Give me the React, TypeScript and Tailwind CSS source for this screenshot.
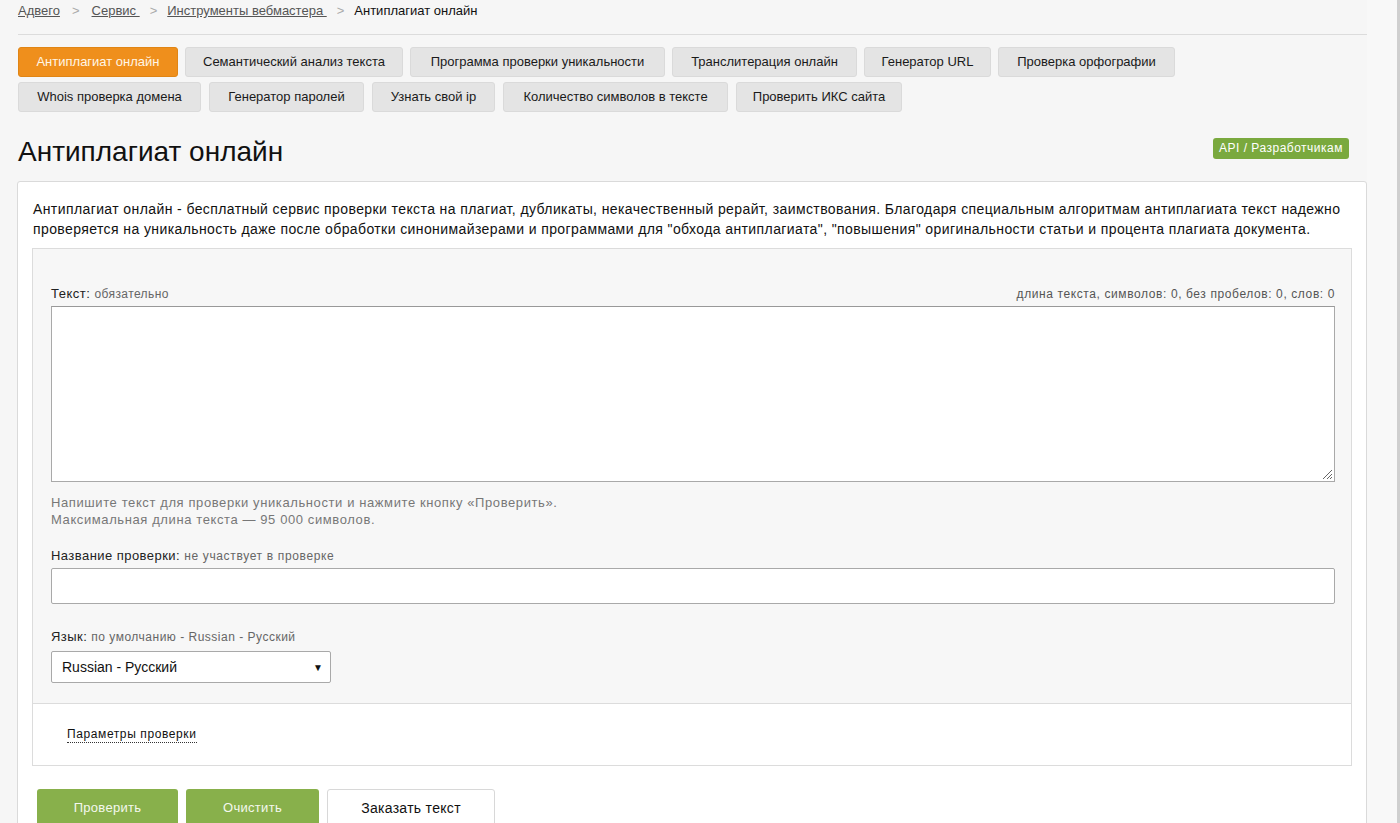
import React from "react";

const font = { fontFamily: '"Liberation Sans", Arial, sans-serif' };

const row1 = [
  { t: "Антиплагиат онлайн", w: "w-[160px]", active: true },
  { t: "Семантический анализ текста", w: "w-[218px]" },
  { t: "Программа проверки уникальности", w: "w-[255px]" },
  { t: "Транслитерация онлайн", w: "w-[185px]" },
  { t: "Генератор URL", w: "w-[127px]" },
  { t: "Проверка орфографии", w: "w-[177px]" },
];
const row2 = [
  { t: "Whois проверка домена", w: "w-[183px]" },
  { t: "Генератор паролей", w: "w-[155px]" },
  { t: "Узнать свой ip", w: "w-[123px]" },
  { t: "Количество символов в тексте", w: "w-[225px]" },
  { t: "Проверить ИКС сайта", w: "w-[166px]" },
];

function Tab({ t, w, active }: { t: string; w: string; active?: boolean }) {
  return (
    <div
      className={
        "h-[30px] flex items-center justify-center rounded-[3px] text-[13px] border " +
        w +
        " " +
        (active
          ? "bg-[#ef8f1c] border-[#e08515] text-[#fff6e6]"
          : "bg-[#e4e4e4] border-[#dadada] text-[#1a1a1a]")
      }
    >
      {t}
    </div>
  );
}

export default function App() {
  return (
    <div className="flex h-[823px] overflow-hidden bg-[#f6f6f6] text-[#1a1a1a]" style={font}>
      <div className="w-[1367px] shrink-0 pl-[17px]">
        {/* breadcrumb */}
        <div className="h-[35px] border-b border-[#dcdcdc] pt-[3px] ml-[1px] flex items-start text-[13px] leading-[16px]">
          <span className="underline text-[#555]">Адвего</span>
          <span className="mx-[12px] text-[#aaa]">&gt;</span>
          <span className="underline text-[#555]">Сервис&nbsp;</span>
          <span className="mx-[10px] text-[#aaa]">&gt;</span>
          <span className="underline text-[#555]">Инструменты вебмастера&nbsp;</span>
          <span className="mx-[10px] text-[#aaa]">&gt;</span>
          <span className="text-[#111]">Антиплагиат онлайн</span>
        </div>

        {/* tabs */}
        <div className="mt-[12px] ml-[1px] flex flex-col gap-[5px]">
          <div className="flex gap-[7px]">
            {row1.map((b) => (
              <Tab key={b.t} {...b} />
            ))}
          </div>
          <div className="flex gap-[8px]">
            {row2.map((b) => (
              <Tab key={b.t} {...b} />
            ))}
          </div>
        </div>

        {/* title */}
        <div className="mt-[24px] h-[32px] flex items-center justify-between pr-[18px]">
          <h1 className="text-[28px] leading-[32px] text-[#111] ml-[1px]">Антиплагиат онлайн</h1>
          <div className="h-[21px] w-[136px] flex items-center justify-center rounded-[3px] bg-[#7aa93e] text-white text-[12px] tracking-[0.5px] mt-[-8px]">
            API / Разработчикам
          </div>
        </div>

        {/* card */}
        <div className="mt-[13px] bg-white border border-[#dadada] rounded-[3px] h-[700px]">
          <p className="pl-[15px] pr-[4px] pt-[17px] text-[14px] leading-[20px] tracking-[0.4px] text-[#111]">
            Антиплагиат онлайн - бесплатный сервис проверки текста на плагиат, дубликаты, некачественный рерайт, заимствования. Благодаря специальным алгоритмам антиплагиата текст надежно
            <br />
            проверяется на уникальность даже после обработки синонимайзерами и программами для "обхода антиплагиата", "повышения" оригинальности статьи и процента плагиата документа.
          </p>

          <div className="mt-[9px] mx-[14px] border border-[#dcdcdc]">
            <div className="bg-[#f7f7f7] pt-[37px] pl-[18px] pr-[16px] pb-[20px] border-b border-[#dcdcdc]">
              <div className="flex justify-between items-end h-[16px] mb-[4px]">
                <div className="text-[13px] leading-[16px] tracking-[0.5px] text-[#222]">
                  Текст: <span className="text-[12px] tracking-[0.4px] text-[#666]">обязательно</span>
                </div>
                <div className="text-[12px] leading-[16px] tracking-[0.6px] text-[#555]">
                  длина текста, символов: 0, без пробелов: 0, слов: 0
                </div>
              </div>
              <div className="relative h-[176px] bg-white border border-[#a9a9a9] border-t-[#999]">
                <svg className="absolute right-[1px] bottom-[1px]" width="12" height="12" viewBox="0 0 12 12">
                  <path d="M2 11 L11 2 M6 11 L11 6 M9 11 L11 9" stroke="#666" strokeWidth="1" />
                </svg>
              </div>
              <div className="mt-[12px] text-[13px] leading-[17px] tracking-[0.6px] text-[#777]">
                Напишите текст для проверки уникальности и нажмите кнопку «Проверить».
                <br />
                Максимальная длина текста — 95 000 символов.
              </div>

              <div className="mt-[20px] h-[16px] text-[13px] leading-[16px] tracking-[0.45px] text-[#222] mb-[4px]">
                Название проверки: <span className="text-[12px] tracking-[0.65px] text-[#666]">не участвует в проверке</span>
              </div>
              <div className="h-[36px] bg-white border border-[#a9a9a9] rounded-[2px]"></div>

              <div className="mt-[25px] h-[16px] text-[13px] leading-[16px] tracking-[0.45px] text-[#222] mb-[6px]">
                Язык: <span className="text-[12px] tracking-[0.5px] text-[#666]">по умолчанию - Russian - Русский</span>
              </div>
              <div className="w-[280px] h-[32px] bg-white border border-[#a9a9a9] rounded-[2px] flex items-center justify-between pl-[10px] pr-[7px] text-[14px] text-[#111]">
                <span>Russian - Русский</span>
                <span className="text-[10px]">▼</span>
              </div>
            </div>
            <div className="h-[61px] bg-white flex items-center pl-[34px]">
              <span className="text-[12px] leading-[15px] tracking-[0.6px] text-[#111] border-b border-dotted border-[#333]">
                Параметры проверки
              </span>
            </div>
          </div>

          <div className="mt-[23px] ml-[19px] flex gap-[8px]">
            <div className="w-[141px] h-[38px] rounded-[3px] bg-[#88b04b] text-[#f4f8ee] text-[13px] tracking-[0.3px] flex items-center justify-center">
              Проверить
            </div>
            <div className="w-[133px] h-[38px] rounded-[3px] bg-[#88b04b] text-[#f4f8ee] text-[13px] tracking-[0.3px] flex items-center justify-center">
              Очистить
            </div>
            <div className="w-[168px] h-[38px] rounded-[3px] bg-white border border-[#d8d8d8] text-[#111] text-[14px] tracking-[0.3px] flex items-center justify-center">
              Заказать текст
            </div>
          </div>
        </div>
      </div>
      <div className="w-[30px] shrink-0 bg-[#f8f8f8]"></div>
      <div className="w-[3px] shrink-0 bg-[#cfcfcf]"></div>
    </div>
  );
}
